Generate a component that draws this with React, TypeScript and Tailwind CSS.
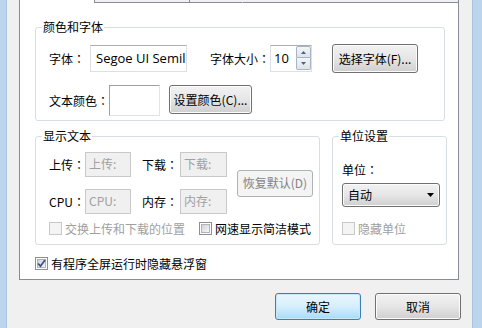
import React from "react";

const FONT = '"Noto Sans CJK SC", "Noto Sans", sans-serif';

function Lbl({ t }: { t: string }) {
  const base = t.replace("：", "");
  return (
    <span className="whitespace-nowrap">
      {base}
      <span style={{ fontFamily: '"Noto Sans CJK TC", sans-serif' }}>：</span>
    </span>
  );
}

function Btn({ children, w, h, disabled, primary, className = "" }: { children: React.ReactNode; w: string; h: string; disabled?: boolean; primary?: boolean; className?: string }) {
  let cls = "";
  if (disabled) cls = "border-[#adb2b5] bg-[#f4f4f4] text-[#838383]";
  else if (primary)
    cls = "border-[#3c7fb1] bg-gradient-to-b from-[#eaf6fd] via-[#d6effc] to-[#a9daf5] text-black shadow-[inset_0_0_0_1px_#c8e8fa]";
  else cls = "border-[#707070] bg-gradient-to-b from-[#f2f2f2] via-[#e6e6e6] to-[#cfcfcf] text-black shadow-[inset_0_0_0_1px_#fcfcfc]";
  return (
    <div className={`${w} ${h} ${cls} ${className} border rounded-[3px] flex items-center justify-center text-[12px] leading-[16px] shrink-0 whitespace-nowrap`}>
      {children}
    </div>
  );
}

function Check({ checked, disabled }: { checked?: boolean; disabled?: boolean }) {
  if (disabled)
    return <div className="w-[13px] h-[13px] border border-[#c8c8c8] bg-[#f4f4f4] shrink-0" />;
  return (
    <div className="w-[13px] h-[13px] border border-[#8e8f8f] bg-white p-[1px] shrink-0">
      <div className="w-full h-full border border-[#b0b4ba] bg-gradient-to-br from-[#d0d4d9] to-[#f5f6f7] flex items-center justify-center">
        {checked && (
          <svg width="9" height="9" viewBox="0 0 9 9" className="overflow-visible">
            <path d="M1 4.5 L3.5 7.2 L8 1" fill="none" stroke="#3e4f8a" strokeWidth="1.8" />
          </svg>
        )}
      </div>
    </div>
  );
}

function Group({ title, className, children }: { title: string; className: string; children: React.ReactNode }) {
  return (
    <div className={`${className} relative border border-[#d5dfe5] rounded-[3px] shrink-0`}>
      <div className="absolute left-[6px] top-[-9px] px-[1px] bg-white text-[12px] leading-[16px] text-black">{title}</div>
      {children}
    </div>
  );
}

function DisabledInput({ w, text }: { w: string; text: string }) {
  return (
    <div className={`${w} h-[25px] border border-[#c9c9c9] bg-[#f0f0f0] text-[#a0a0a0] text-[12px] leading-[16px] pl-[3px] pt-[3px] shrink-0 whitespace-nowrap`}>
      {text}
    </div>
  );
}

const LBL = "text-[12px] leading-[16px] shrink-0 whitespace-nowrap";

export default function App() {
  return (
    <div className="w-[482px] h-[328px] bg-[#f0f0f0] flex overflow-hidden text-black" style={{ fontFamily: FONT }}>
      <div className="w-[7px] h-full bg-[#bcd4ec] border-r border-[#a9c4df] shrink-0" />
      <div className="flex-1 flex flex-col pl-[12px] pr-[13px]">
        {/* tab strip */}
        <div className="h-[3px] flex shrink-0">
          <div className="w-[75px] h-full border-l border-[#898c95] bg-white" />
          <div className="w-[95px] h-full border-l border-b border-[#898c95]" />
          <div className="w-[53px] h-full border-l border-b border-[#898c95]" />
          <div className="flex-1 h-full border-l border-b border-r border-[#898c95] border-l-transparent" />
        </div>
        {/* panel */}
        <div className="h-[277px] border-l border-r border-b border-[#898c95] bg-white pl-[15px] pt-[24px] shrink-0">
          <Group title="颜色和字体" className="w-[410px] h-[94px]">
            <div className="pt-[16px] pl-[13px]">
              <div className="flex items-center h-[29px]">
                <div className={`w-[41px] ${LBL}`}><Lbl t="字体：" /></div>
                <div className="w-[97px] h-[27px] shrink-0 border border-[#dbdfe6] border-t-[#abadb3] bg-white text-[13px] leading-[18px] pl-[5px] pt-[3px] overflow-hidden whitespace-nowrap" style={{ fontFamily: '"Open Sans", "Noto Sans", sans-serif' }}>
                  Segoe UI Semil
                </div>
                <div className={`ml-[23px] w-[60px] ${LBL}`}><Lbl t="字体大小：" /></div>
                <div className="w-[42px] h-[27px] shrink-0 border border-[#dbdfe6] border-t-[#abadb3] bg-white flex">
                  <div className="flex-1 text-[13px] leading-[18px] pl-[3px] pt-[3px]" style={{ fontFamily: '"Open Sans", "Noto Sans", sans-serif' }}>10</div>
                  <div className="w-[15px] flex flex-col">
                    <div className="h-[12px] border border-[#a7b4c5] bg-gradient-to-b from-[#f3f5f7] to-[#dfe4ea] flex items-center justify-center rounded-t-[2px]">
                      <svg width="5" height="3" viewBox="0 0 5 3"><path d="M0 3 L2.5 0 L5 3 Z" fill="#4d6185" /></svg>
                    </div>
                    <div className="h-[12px] border border-t-0 border-[#a7b4c5] bg-gradient-to-b from-[#f3f5f7] to-[#dfe4ea] flex items-center justify-center rounded-b-[2px]">
                      <svg width="5" height="3" viewBox="0 0 5 3"><path d="M0 0 L2.5 3 L5 0 Z" fill="#4d6185" /></svg>
                    </div>
                  </div>
                </div>
                <Btn w="w-[86px]" h="h-[29px]" className="ml-[20px]">选择字体(F)...</Btn>
              </div>
              <div className="flex items-start mt-[12px]">
                <div className={`w-[60px] h-[31px] flex items-center ${LBL}`}><Lbl t="文本颜色：" /></div>
                <div className="w-[51px] h-[31px] shrink-0 border border-[#a0a0a0] border-r-[#e3e3e3] border-b-[#e3e3e3] bg-white" />
                <Btn w="w-[83px]" h="h-[29px]" className="ml-[9px]">设置颜色(C)...</Btn>
              </div>
            </div>
          </Group>

          <div className="flex mt-[15px]">
            <Group title="显示文本" className="w-[285px] h-[109px]">
              <div className="pt-[15px] pl-[13px]">
                <div className="flex items-center">
                  <div className="flex flex-col">
                    <div className="flex items-center h-[25px]">
                      <div className={`w-[36px] ${LBL}`}><Lbl t="上传：" /></div>
                      <DisabledInput w="w-[46px]" text="上传:" />
                      <div className={`ml-[11px] w-[38px] ${LBL}`}><Lbl t="下载：" /></div>
                      <DisabledInput w="w-[47px]" text="下载:" />
                    </div>
                    <div className="flex items-center h-[25px] mt-[12px]">
                      <div className={`w-[36px] ${LBL}`}><Lbl t="CPU：" /></div>
                      <DisabledInput w="w-[46px]" text="CPU:" />
                      <div className={`ml-[11px] w-[38px] ${LBL}`}><Lbl t="内存：" /></div>
                      <DisabledInput w="w-[47px]" text="内存:" />
                    </div>
                  </div>
                  <Btn w="w-[76px]" h="h-[27px]" disabled className="ml-[10px]">恢复默认(D)</Btn>
                </div>
                <div className="flex items-center mt-[8px] h-[13px]">
                  <Check disabled />
                  <div className="ml-[3px] w-[134px] text-[12px] leading-[16px] text-[#a0a0a0] whitespace-nowrap">交换上传和下载的位置</div>
                  <Check />
                  <div className="ml-[3px] text-[12px] leading-[16px] whitespace-nowrap">网速显示简洁模式</div>
                </div>
              </div>
            </Group>
            <Group title="单位设置" className="w-[115px] h-[109px] ml-[12px]">
              <div className="pl-[9px]">
                <div className={`mt-[25px] h-[16px] ${LBL}`}><Lbl t="单位：" /></div>
                <div className="mt-[5px] w-[98px] h-[24px] border border-[#707070] rounded-[3px] bg-gradient-to-b from-[#f2f2f2] via-[#e6e6e6] to-[#cfcfcf] shadow-[inset_0_0_0_1px_#fcfcfc] flex items-center pl-[5px] pr-[5px]">
                  <div className="flex-1 text-[12px] leading-[16px]">自动</div>
                  <svg width="7" height="4" viewBox="0 0 7 4"><path d="M0 0 L7 0 L3.5 4 Z" fill="#000" /></svg>
                </div>
                <div className="flex items-center mt-[15px] h-[13px]">
                  <Check disabled />
                  <div className="ml-[3px] text-[12px] leading-[16px] text-[#a0a0a0] whitespace-nowrap">隐藏单位</div>
                </div>
              </div>
            </Group>
          </div>

          <div className="flex items-center mt-[12px] h-[13px]">
            <Check checked />
            <div className="ml-[3px] text-[12px] leading-[16px] whitespace-nowrap">有程序全屏运行时隐藏悬浮窗</div>
          </div>
        </div>

        <div className="flex justify-end mt-[13px] mr-[-2px] gap-[14px]">
          <Btn w="w-[86px]" h="h-[27px]" primary>确定</Btn>
          <Btn w="w-[86px]" h="h-[27px]">取消</Btn>
        </div>
      </div>
      <div className="w-[10px] h-full bg-[#bcd4ec] border-l border-[#a9c4df] shrink-0" />
    </div>
  );
}
